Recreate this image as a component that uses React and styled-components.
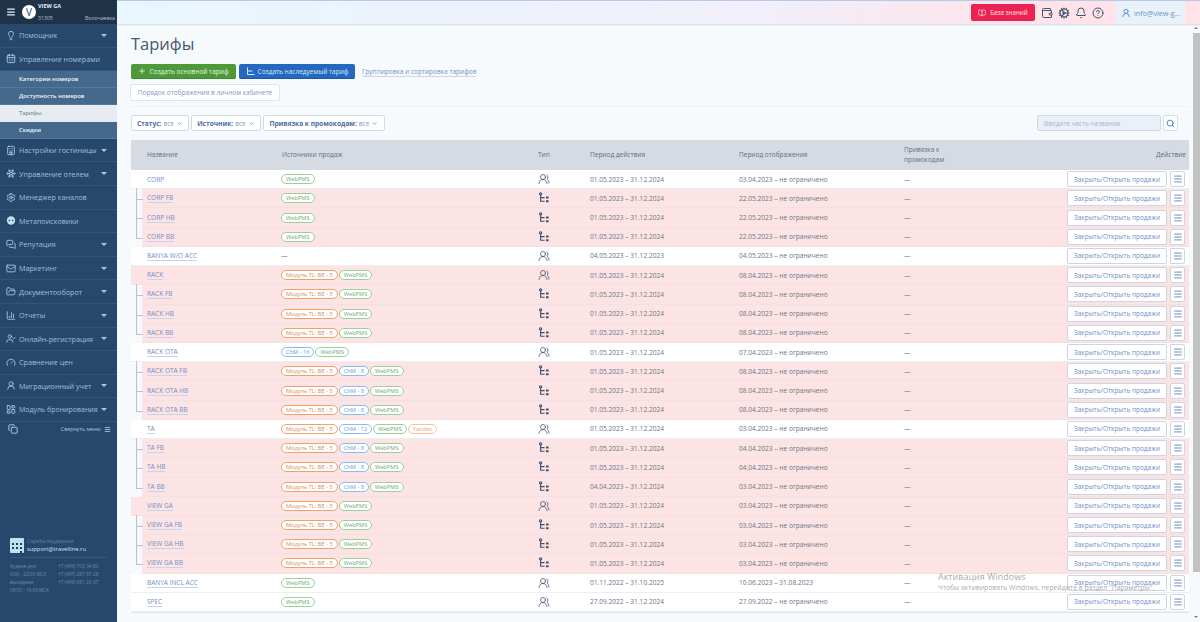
import React from "react";
import styled, { createGlobalStyle, css } from "styled-components";
import {
  Lightbulb, CalendarDays, Hotel, Snowflake, Settings, MessagesSquare, Mail, FolderOpen, ChartColumn,
  UserCheck, Gauge, UserRound, LayoutDashboard, ChevronDown, Plus, Search, Menu, Wallet, Bell, CircleHelp, Cog, Copy, BookOpen, UsersRound,
} from "lucide-react";

const Global = createGlobalStyle`
  html, body { margin: 0; padding: 0; height: 100%; overflow: hidden; }
  body { font-family: "Open Sans", "Liberation Sans", sans-serif; background: #f6fafd; }
  * { box-sizing: border-box; }
`;

const Page = styled.div`
  position: relative;
  display: flex;
  width: 1200px;
  height: 622px;
  overflow: hidden;
`;

/* Sidebar */
const Sidebar = styled.aside`
  width: 117px;
  flex: none;
  display: flex;
  flex-direction: column;
  background: #27486a;
  color: #a9c6e2;
`;
const Brand = styled.div`
  height: 24px;
  flex: none;
  display: flex;
  align-items: center;
  background: #1e3348;
  padding-left: 6px;
  color: #e8eef5;
`;
const Avatar = styled.div`
  width: 14px;
  height: 14px;
  border-radius: 50%;
  background: #fff;
  color: #27486a;
  margin-left: 6px;
  margin-right: 2px;
  font-size: 10px;
  line-height: 14px;
  text-align: center;
  flex: none;
`;
const BrandText = styled.div`
  flex: 1;
  display: flex;
  flex-direction: column;
  justify-content: space-between;
  height: 20px;
  font-size: 5.2px;
  padding-right: 2px;
`;
const BrandName = styled.span`
  font-weight: 700;
  font-size: 5.5px;
`;
const BrandMeta = styled.span`
  display: flex;
  justify-content: space-between;
  color: #b4c4d4;
`;
const NavItem = styled.div`
  height: 23.6px;
  flex: none;
  display: flex;
  align-items: center;
  gap: 3px;
  padding: 0 9px 0 6px;
  font-size: ${(p) => p.$size || 7.2}px;
  border-bottom: 1px solid #31567a;
  color: #a0bfdc;
  white-space: nowrap;
`;
const NavIcon = styled.span`
  width: 10px;
  height: 12px;
  flex: none;
  display: flex;
  align-items: center;
  justify-content: center;
  color: #c2dcf2;
`;
const NavLabel = styled.span`
  flex: 1;
  min-width: 0;
`;
const Caret = styled.span`
  width: 0;
  height: 0;
  flex: none;
  border-left: 3px solid transparent;
  border-right: 3px solid transparent;
  border-top: 3px solid #a9c6e2;
  margin-right: 1px;
`;
const SubItem = styled.div`
  height: 16.9px;
  flex: none;
  display: flex;
  align-items: center;
  padding-left: 19px;
  font-size: 5.9px;
  font-weight: ${(p) => (p.$active ? 400 : 600)};
  background: ${(p) => (p.$active ? "#e6ecf2" : "#45698c")};
  color: ${(p) => (p.$active ? "#5c7590" : "#f0f5fa")};
  border-bottom: 1px solid ${(p) => (p.$active ? "#e6ecf2" : "#54789a")};
`;
const Collapse = styled.div`
  display: flex;
  align-items: center;
  height: 15px;
  flex: none;
  padding: 0 6px 0 8px;
  font-size: 5.3px;
  color: #a9c6e2;
  gap: 3px;
`;
const Spacer = styled.div`
  flex: 1;
`;
const Support = styled.div`
  display: flex;
  align-items: center;
  gap: 3px;
  margin: 0 0 4px 10px;
`;
const SupportIcon = styled.div`
  width: 14px;
  height: 15px;
  background: #bfe0f5;
  border-radius: 1px;
  color: #1f3c58;
  flex: none;
`;
const SupportText = styled.div`
  display: flex;
  flex-direction: column;
  font-size: 5px;
  line-height: 7.5px;
  color: #5f88ac;
`;
const SupportMail = styled.span`
  font-size: 5.8px;
  color: #cfe6f8;
`;
const Contacts = styled.div`
  margin: 0 0 28px 10px;
  width: 97px;
  border-top: 1px solid #35597c;
  padding-top: 4px;
  display: grid;
  grid-template-columns: 48px 1fr;
  font-size: 4.7px;
  line-height: 8px;
  color: #6b8eae;
`;

/* Main */
const Right = styled.div`
  flex: 1;
  min-width: 0;
  display: flex;
  flex-direction: column;
`;
const TopBar = styled.header`
  height: 24px;
  flex: none;
  display: flex;
  align-items: center;
  justify-content: flex-end;
  padding-right: 15px;
  background: linear-gradient(90deg, #e9f6fd 0%, #f1effb 60%, #ffe3e8 85%, #ffe3e8 100%);
  border-top: 1px solid #b7c9e6;
  box-shadow: 0 1px 2px rgba(90, 110, 140, 0.25);
  z-index: 1;
`;
const KnowledgeBtn = styled.div`
  width: 64px;
  height: 17px;
  margin-right: 6px;
  display: flex;
  align-items: center;
  justify-content: center;
  gap: 4px;
  background: #ea2352;
  border-radius: 2px;
  color: #fde3ea;
  font-size: 6.2px;
`;
const TopIcons = styled.div`
  display: flex;
  align-items: center;
  gap: 5px;
  color: #3f5872;
  margin-right: 12px;
`;
const UserCell = styled.div`
  width: 69px;
  height: 23px;
  display: flex;
  align-items: center;
  gap: 3px;
  padding-left: 5px;
  background: #e9f2fb;
  color: #6f95c8;
  font-size: 7.2px;
`;
const Body = styled.div`
  flex: 1;
  min-height: 0;
  display: flex;
`;
const Content = styled.main`
  flex: 1;
  min-width: 0;
  padding: 0 1px 0 14px;
`;
const Title = styled.h1`
  margin: 0;
  height: 40px;
  padding-top: 9px;
  font-size: 16.5px;
  line-height: 22px;
  font-weight: 400;
  color: #47596c;
`;
const Actions = styled.div`
  display: flex;
  align-items: center;
  height: 15px;
  gap: 3px;
`;
const Btn = styled.div`
  height: 15px;
  display: flex;
  align-items: center;
  justify-content: center;
  gap: 3px;
  border-radius: 2px;
  font-size: 6.5px;
  white-space: nowrap;
  width: ${(p) => p.$w}px;
  ${(p) =>
    p.$kind === "green" && css`background: #4c9a3a; color: #e6f3e0; border-bottom: 1px solid #3f8a30;`}
  ${(p) =>
    p.$kind === "blue" && css`background: #2468bf; color: #dbe9f8; border-bottom: 1px solid #1c58a5;`}
  ${(p) =>
    p.$kind === "white" && css`background: #fff; color: #7f99be; box-shadow: 0 0 0 1px #dfe5ee;`}
`;
const GroupLink = styled.a`
  margin-left: 4px;
  font-size: 6.5px;
  color: #7593bf;
  border-bottom: 1px solid #c7d7ee;
  line-height: 9px;
`;
const SecondRow = styled.div`
  margin-top: 6px;
  height: 22px;
  border-bottom: 1px solid #edf0f4;
  width: 1058px;
`;
const Filters = styled.div`
  margin-top: 8px;
  width: 1047px;
  height: 16px;
  display: flex;
  align-items: center;
  gap: 2px;
`;
const Filter = styled.div`
  height: 16px;
  width: ${(p) => p.$w}px;
  display: flex;
  align-items: center;
  justify-content: center;
  gap: 2px;
  background: #fff;
  border: 1px solid #d3dae5;
  border-radius: 2px;
  font-size: 6.6px;
  color: #8ba0bf;
  white-space: nowrap;
`;
const FilterKey = styled.b`
  font-weight: 700;
  color: #4a6ea5;
`;
const SearchInput = styled.div`
  margin-left: auto;
  width: 124px;
  height: 16px;
  display: flex;
  align-items: center;
  padding-left: 6px;
  background: #e9f0f9;
  border: 1px solid #cfd9e7;
  border-radius: 2px;
  font-size: 6.4px;
  color: #a8b6ca;
`;
const SearchBtn = styled.div`
  width: 15px;
  height: 16px;
  display: flex;
  align-items: center;
  justify-content: center;
  background: #fff;
  border: 1px solid #d6deea;
  border-radius: 2px;
  color: #3f78b8;
`;
const Table = styled.div`
  margin-top: 9px;
  width: 1058px;
  border-bottom: 1px solid #e1e6ec;
`;
const Row = styled.div`
  position: relative;
  display: grid;
  grid-template-columns: 135px 256px 52px 149px 165px 1fr auto;
  align-items: center;
  height: ${(p) => (p.$head ? 30 : 19.23)}px;
  padding-left: ${(p) => (p.$child ? 5 : 16)}px;
  margin-left: ${(p) => (p.$child ? 11 : 0)}px;
  padding-right: 4px;
  font-size: 6.6px;
  color: #6a7687;
  background: ${(p) => (p.$head ? "#d6dbe3" : p.$pink ? "#fde4e4" : "#fff")};
  border-bottom: 1px solid ${(p) => (p.$head ? "#d6dbe3" : p.$pink ? "#f2e0e2" : "#eceff3")};

  ${(p) =>
    p.$child &&
    css`
      &::before {
        content: "";
        position: absolute;
        left: -6px;
        top: ${p.$first ? -1 : -9}px;
        height: ${p.$first ? 11 : 19}px;
        width: 6px;
        border-left: 1px solid #b9c1cc;
        border-bottom: 1px solid #b9c1cc;
      }
    `}
`;
const Name = styled.a`
  justify-self: start;
  font-size: 6.5px;
  color: #6f8fc6;
  ${(p) => !p.$plain && css`border-bottom: 1px solid #c5d3ee; line-height: 9px;`}
`;
const HeadCell = styled.div`
  color: #626d7c;
  font-size: 6.5px;
  line-height: 9.5px;
  ${(p) => p.$right && css`text-align: right; margin-right: -1px;`}
`;
const Pills = styled.div`
  display: flex;
  gap: 1px;
  margin-left: -1px;
`;
const Pill = styled.span`
  height: 10px;
  padding: 0 4px;
  display: flex;
  align-items: center;
  border-radius: 5px;
  font-size: 5.7px;
  white-space: nowrap;
  background: #fff;
  border: 1px solid ${(p) => p.$c};
  color: ${(p) => p.$t};
`;
const TypeCell = styled.div`
  display: flex;
  color: #3c5070;
`;
const RowActions = styled.div`
  display: flex;
  gap: 3px;
`;
const SalesBtn = styled.div`
  width: 100px;
  height: 16px;
  display: flex;
  align-items: center;
  justify-content: center;
  background: #fff;
  border: 1px solid #cdd5e2;
  border-radius: 2px;
  font-size: 6.5px;
  color: #6f8fc6;
  white-space: nowrap;
`;
const MenuBtn = styled.div`
  width: 15px;
  height: 16px;
  display: flex;
  align-items: center;
  justify-content: center;
  background: #fff;
  border: 1px solid #cdd5e2;
  border-radius: 2px;
  color: #4a78b8;
`;

/* Scrollbar */
const Scrollbar = styled.div`
  width: 10px;
  flex: none;
  display: flex;
  flex-direction: column;
  align-items: flex-end;
  background: #f6fafd;
  padding-top: 9px;
  position: relative;
`;
const Thumb = styled.div`
  width: 7px;
  height: 539px;
  background: #c2c2c2;
`;
const ArrowUp = styled.span`
  position: absolute;
  top: 3px;
  right: 2px;
  width: 0;
  height: 0;
  border-left: 2px solid transparent;
  border-right: 2px solid transparent;
  border-bottom: 2px solid #7c7c7c;
`;
const ArrowDown = styled(ArrowUp)`
  top: auto;
  bottom: 4px;
  border-bottom: 0;
  border-top: 2px solid #7c7c7c;
`;
const Watermark = styled.div`
  position: absolute;
  left: 938px;
  top: 570px;
  color: rgba(130, 130, 130, 0.7);
  font-family: "Open Sans", sans-serif;
  pointer-events: none;
  white-space: nowrap;
`;
const WmTitle = styled.div`
  font-size: 9px;
  line-height: 13px;
`;
const WmSub = styled.div`
  font-size: 6.8px;
  line-height: 9px;
`;

const TreeIcon = () => (
  <svg width="12" height="12" viewBox="0 0 12 12" fill="none" stroke="#3c5070" strokeWidth="1.1">
    <circle cx="2.6" cy="1.8" r="1.1" />
    <path d="M2.6 3v6.2h4M2.6 5.6h4" />
    <path d="M8 4.6h2.6v2H8zM8 8.2h2.6v2H8z" fill="#3c5070" stroke="none" />
  </svg>
);

const TreeIcon2 = () => (
  <svg width="9" height="9" viewBox="0 0 9 9" fill="none" stroke="#dbe9f8" strokeWidth="1">
    <path d="M1.5 0.5v7h7M1.5 4h5" />
  </svg>
);

const MetaIcon = ({ size }) => (
  <svg width={size} height={size} viewBox="0 0 12 12">
    <circle cx="6" cy="6" r="5" fill="#c2dcf2" />
    <circle cx="4" cy="6" r="1" fill="#27486a" />
    <circle cx="8" cy="6" r="1" fill="#27486a" />
  </svg>
);

const nav = [
  [Lightbulb, "Помощник", 1],
  [CalendarDays, "Управление номерами", 0],
  "sub",
  [Hotel, "Настройки гостиницы", 1],
  [Snowflake, "Управление отелем", 1],
  [Settings, "Менеджер каналов", 0],
  [MetaIcon, "Метапоисковики", 0],
  [MessagesSquare, "Репутация", 1],
  [Mail, "Маркетинг", 1],
  [FolderOpen, "Документооборот", 1],
  [ChartColumn, "Отчеты", 1],
  [UserCheck, "Онлайн-регистрация", 1],
  [Gauge, "Сравнение цен", 0],
  [UserRound, "Миграционный учет", 1],
  [LayoutDashboard, "Модуль бронирования", 1, 7],
];

const M = ["Модуль TL: BE - 5", "#f0a268", "#d98e5c"];
const W = ["WebPMS", "#9ccf9c", "#6faa78"];
const C = (n) => [`ChM - ${n}`, "#85bdf2", "#5f9bd8"];
const Y = ["Yandex", "#f8c39c", "#eb9f6a"];
const P = "01.05.2023 – 31.12.2024";
const U = " – не ограничено";
const row = (name, src, period, shown, o = {}) => ({ name, src, period, shown, ...o });
const ch = { child: 1, pink: 1 };

const rows = [
  row("CORP", [W], P, "03.04.2023" + U, { plain: 1 }),
  row("CORP FB", [W], P, "22.05.2023" + U, { ...ch, first: 1 }),
  row("CORP HB", [W], P, "22.05.2023" + U, ch),
  row("CORP BB", [W], P, "22.05.2023" + U, ch),
  row("BANYA W/O ACC", null, "04.05.2023 – 31.12.2023", "04.05.2023" + U),
  row("RACK", [M, W], P, "08.04.2023" + U, { pink: 1 }),
  row("RACK FB", [M, W], P, "08.04.2023" + U, { ...ch, first: 1 }),
  row("RACK HB", [M, W], P, "08.04.2023" + U, ch),
  row("RACK BB", [M, W], P, "08.04.2023" + U, ch),
  row("RACK OTA", [C(16), W], P, "07.04.2023" + U),
  row("RACK OTA FB", [M, C(8), W], P, "08.04.2023" + U, { ...ch, first: 1 }),
  row("RACK OTA HB", [M, C(8), W], P, "08.04.2023" + U, ch),
  row("RACK OTA BB", [M, C(8), W], P, "08.04.2023" + U, ch),
  row("TA", [M, C(12), W, Y], P, "03.04.2023" + U),
  row("TA FB", [M, C(8), W], P, "04.04.2023" + U, { ...ch, first: 1 }),
  row("TA HB", [M, C(8), W], P, "04.04.2023" + U, ch),
  row("TA BB", [M, C(8), W], "04.04.2023 – 31.12.2024", "03.04.2023" + U, ch),
  row("VIEW GA", [M, W], P, "03.04.2023" + U, { pink: 1 }),
  row("VIEW GA FB", [M, W], P, "03.04.2023" + U, { ...ch, first: 1 }),
  row("VIEW GA HB", [M, W], P, "03.04.2023" + U, ch),
  row("VIEW GA BB", [M, W], P, "03.04.2023" + U, ch),
  row("BANYA INCL ACC", [W], "01.11.2022 – 31.10.2025", "10.06.2023 – 31.08.2023"),
  row("SPEC", [W], "27.09.2022 – 31.12.2024", "27.09.2022" + U),
];

export default function App() {
  return (
    <Page>
      <Global />
      <Sidebar>
        <Brand>
          <Menu size={10} strokeWidth={3} />
          <Avatar>V</Avatar>
          <BrandText>
            <BrandName>VIEW GA</BrandName>
            <BrandMeta>
              <span>31305</span>
              <span>Волочаевка</span>
            </BrandMeta>
          </BrandText>
        </Brand>
        {nav.map((n, i) =>
          n === "sub" ? (
            <React.Fragment key={i}>
              <SubItem>Категории номеров</SubItem>
              <SubItem>Доступность номеров</SubItem>
              <SubItem $active>Тарифы</SubItem>
              <SubItem>Скидки</SubItem>
            </React.Fragment>
          ) : (
            <NavItem key={i} $size={n[3]}>
              <NavIcon>
                {React.createElement(n[0], { size: 11, strokeWidth: 1.8 })}
              </NavIcon>
              <NavLabel>{n[1]}</NavLabel>
              {n[2] ? <Caret /> : null}
            </NavItem>
          )
        )}
        <Collapse>
          <Copy size={10} strokeWidth={2} color="#c2dcf2" />
          <Spacer />
          <span>Свернуть меню</span>
          <Menu size={7} strokeWidth={3} />
        </Collapse>
        <Spacer />
        <Support>
          <SupportIcon>
            <svg width="14" height="15" viewBox="0 0 14 15" fill="#1f3c58">
              <path d="M2 3h2v2H2zM6 3h2v2H6zM10 3h2v2h-2zM2 7h2v2H2zM10 7h2v2h-2zM10 11h2v2h-2zM6 7h2v2H6z" />
            </svg>
          </SupportIcon>
          <SupportText>
            <span>Служба поддержки</span>
            <SupportMail>support@travelline.ru</SupportMail>
          </SupportText>
        </Support>
        <Contacts>
          <span>будние дни</span>
          <span>+7 (499) 703-34-80</span>
          <span>9:00 - 22:00 МСК</span>
          <span>+7 (495) 287-97-28</span>
          <span>выходные</span>
          <span>+7 (499) 681-23-37</span>
          <span>08:00 - 19:00 МСК</span>
        </Contacts>
      </Sidebar>
      <Right>
        <TopBar>
          <KnowledgeBtn>
            <BookOpen size={8} />
            База знаний
          </KnowledgeBtn>
          <TopIcons>
            <Wallet size={12} strokeWidth={2} />
            <Cog size={12} strokeWidth={2.4} />
            <Bell size={12} strokeWidth={2} />
            <CircleHelp size={12} strokeWidth={2} />
          </TopIcons>
          <UserCell>
            <UserRound size={10} strokeWidth={2} color="#3f86d0" />
            info@view-g...
          </UserCell>
        </TopBar>
        <Body>
          <Content>
            <Title>Тарифы</Title>
            <Actions>
              <Btn $kind="green" $w={105}>
                <Plus size={8} strokeWidth={2.5} />
                Создать основной тариф
              </Btn>
              <Btn $kind="blue" $w={116}>
                <TreeIcon2 />
                Создать наследуемый тариф
              </Btn>
              <GroupLink>Группировка и сортировка тарифов</GroupLink>
            </Actions>
            <SecondRow>
              <Btn $kind="white" $w={148}>Порядок отображения в личном кабинете</Btn>
            </SecondRow>
            <Filters>
              <Filter $w={58}>
                <FilterKey>Статус:</FilterKey> все <ChevronDown size={7} color="#4a6ea5" />
              </Filter>
              <Filter $w={70}>
                <FilterKey>Источник:</FilterKey> все <ChevronDown size={7} color="#4a6ea5" />
              </Filter>
              <Filter $w={122}>
                <FilterKey>Привязка к промокодам:</FilterKey> все <ChevronDown size={7} color="#4a6ea5" />
              </Filter>
              <SearchInput>Вводите часть названия</SearchInput>
              <SearchBtn>
                <Search size={9} strokeWidth={2.4} />
              </SearchBtn>
            </Filters>
            <Table>
              <Row $head>
                <HeadCell>Название</HeadCell>
                <HeadCell>Источники продаж</HeadCell>
                <HeadCell>Тип</HeadCell>
                <HeadCell>Период действия</HeadCell>
                <HeadCell>Период отображения</HeadCell>
                <HeadCell>Привязка к<br />промокодам</HeadCell>
                <HeadCell $right>Действие</HeadCell>
              </Row>
              {rows.map((r) => (
                <Row key={r.name} $child={r.child} $pink={r.pink} $first={r.first}>
                  <Name $plain={r.plain}>{r.name}</Name>
                  <Pills>
                    {r.src
                      ? r.src.map((s) => (
                          <Pill key={s[0]} $c={s[1]} $t={s[2]}>{s[0]}</Pill>
                        ))
                      : "—"}
                  </Pills>
                  <TypeCell>
                    {r.child ? <TreeIcon /> : <UsersRound size={12} strokeWidth={1.5} />}
                  </TypeCell>
                  <span>{r.period}</span>
                  <span>{r.shown}</span>
                  <span>—</span>
                  <RowActions>
                    <SalesBtn>Закрыть/Открыть продажи</SalesBtn>
                    <MenuBtn>
                      <Menu size={10} strokeWidth={2} />
                    </MenuBtn>
                  </RowActions>
                </Row>
              ))}
            </Table>
          </Content>
          <Scrollbar>
            <ArrowUp />
            <Thumb />
            <ArrowDown />
          </Scrollbar>
        </Body>
      </Right>
      <Watermark>
        <WmTitle>Активация Windows</WmTitle>
        <WmSub>Чтобы активировать Windows, перейдите в раздел "Параметры".</WmSub>
      </Watermark>
    </Page>
  );
}
